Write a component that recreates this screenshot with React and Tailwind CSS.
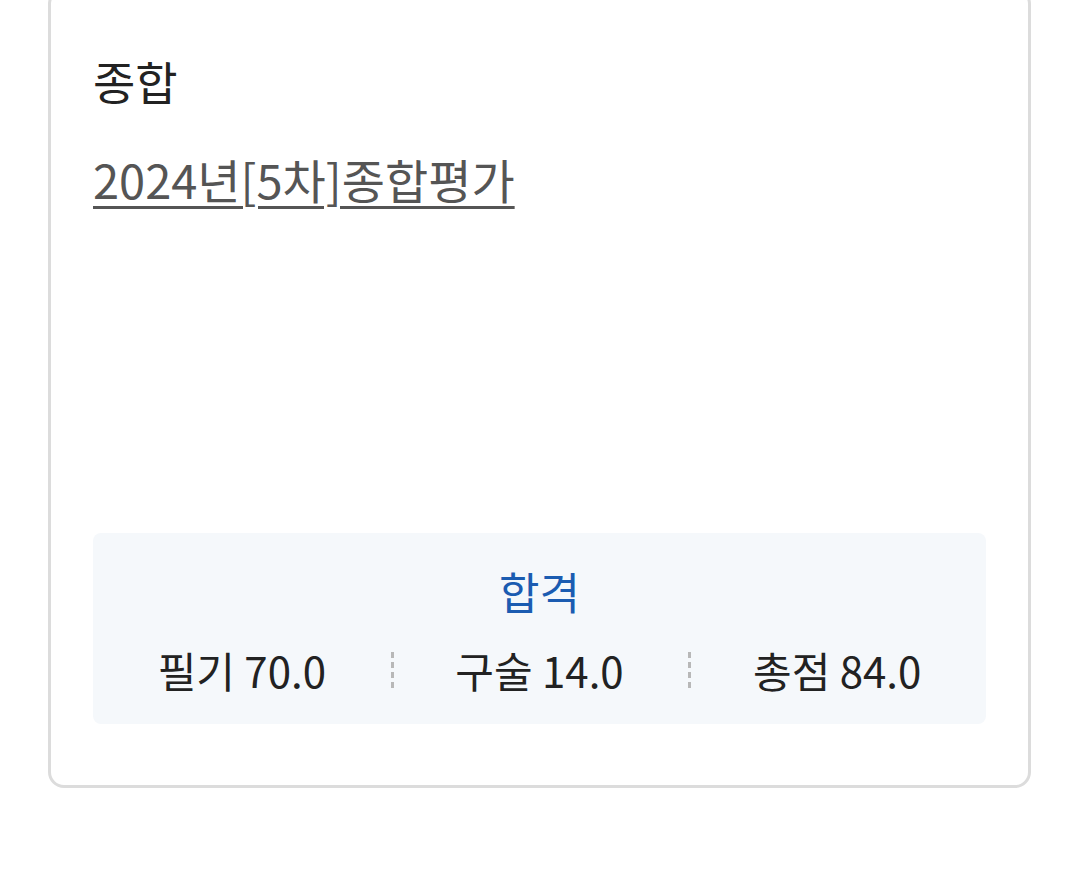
export default function App() {
  const font = { fontFamily: '"Noto Sans CJK KR", "Noto Sans", sans-serif' };
  return (
    <div className="w-[1076px] h-[890px] bg-white overflow-hidden" style={font}>
      <div className="ml-[48px] w-[983px] -mt-[12px] border-[3px] border-[#dcdcdc] rounded-[16px] px-[42px] pt-[61px] pb-[61px]">
        <div className="text-[46px] leading-[56px] text-[#222222]">종합</div>
        <div className="mt-[43px] text-[47px] leading-[56px] text-[#555555] underline decoration-[3px] underline-offset-[7px] whitespace-nowrap">
          2024년[5차]종합평가
        </div>
        <div className="h-[326px]"></div>
        <div className="bg-[#f5f8fb] rounded-[8px] pt-[28px] pb-[28px]">
          <div className="text-center text-[44px] leading-[60px] text-[#1b5cb1]">합격</div>
          <div className="mt-[23px] grid grid-cols-3 items-center">
            <div className="text-center text-[42px] leading-[52px] text-[#222222]">필기 70.0</div>
            <div className="relative text-center text-[42px] leading-[52px] text-[#222222]">
              <span className="absolute left-0 top-[8px] h-[36px] border-l-[3px] border-dashed border-[#b8b8b8]"></span>
              구술 14.0
            </div>
            <div className="relative text-center text-[42px] leading-[52px] text-[#222222]">
              <span className="absolute left-0 top-[8px] h-[36px] border-l-[3px] border-dashed border-[#b8b8b8]"></span>
              총점 84.0
            </div>
          </div>
        </div>
      </div>
    </div>
  );
}
